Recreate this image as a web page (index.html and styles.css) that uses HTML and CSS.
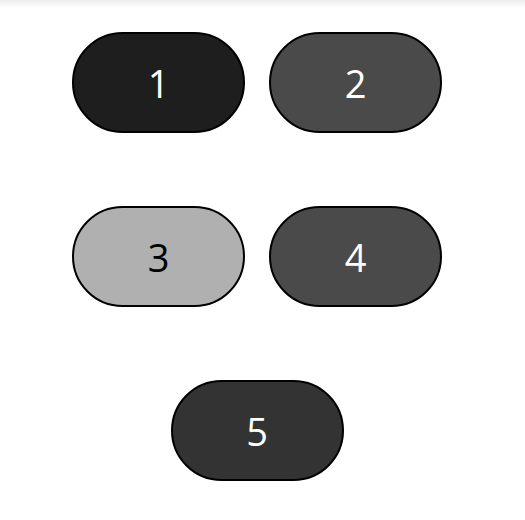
FILE: index.html
```html
<!DOCTYPE html>
<html lang="en">
  <head>
    <meta charset="UTF-8" />
    <title>Pills</title>
    <link rel="stylesheet" href="styles.css">
  </head>
  <body>
    <div class="topo"></div>
    <div class="grade">
      <div class="linha">
        <button class="pilula escuro">1</button>
        <button class="pilula medio">2</button>
      </div>
      <div class="linha">
        <button class="pilula claro">3</button>
        <button class="pilula medio">4</button>
      </div>
      <div class="linha">
        <button class="pilula cinza">5</button>
      </div>
    </div>
  </body>
</html>
```

FILE: styles.css
```css
* {
  margin: 0;
  padding: 0;
  box-sizing: border-box;
}
body {
  background: white;
  font-family: "Open Sans", "Noto Sans", sans-serif;
}
.topo {
  height: 8px;
  background: linear-gradient(#ececec, #ffffff);
}
.grade {
  width: 514px;
  padding-top: 24px;
  display: flex;
  flex-direction: column;
  gap: 73px;
}
.linha {
  display: flex;
  justify-content: center;
  gap: 24px;
}
.pilula {
  width: 173px;
  height: 101px;
  border: 2px solid black;
  border-radius: 51px;
  font-family: "Open Sans", "Noto Sans", sans-serif;
  font-size: 38px;
  color: white;
  cursor: pointer;
}
.escuro {
  background-color: #1e1e1e;
}
.medio {
  background-color: #4a4a4a;
}
.claro {
  background-color: #b0b0b0;
  color: black;
}
.cinza {
  background-color: #333333;
}
```
